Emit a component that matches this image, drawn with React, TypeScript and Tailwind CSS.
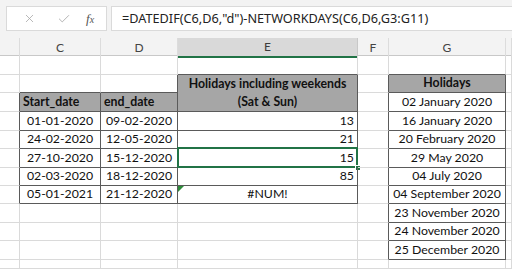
import { X, Check } from 'lucide-react'

type Cell = {
  text?: string
  align?: 'left' | 'center' | 'right'
  bold?: boolean
  fill?: boolean
  boxed?: boolean
  span?: boolean
  selected?: boolean
  errorMark?: boolean
  lines?: string[]
}

const rowHeights = [19, 18, 19, 19, 18, 19, 18, 18, 19, 18, 19, 9]
const colCount = 7 // B C D E F G H

const holidays = [
  '02 January 2020',
  '16 January 2020',
  '20 February 2020',
  '29 May 2020',
  '04 July 2020',
  '04 September 2020',
  '23 November 2020',
  '24 November 2020',
  '25 December 2020',
]

const dates = [
  ['01-01-2020', '09-02-2020', '13'],
  ['24-02-2020', '12-05-2020', '21'],
  ['27-10-2020', '15-12-2020', '15'],
  ['02-03-2020', '18-12-2020', '85'],
  ['05-01-2021', '21-12-2020', '#NUM!'],
]

function buildSheet(): (Cell | null)[][] {
  const rows: (Cell | null)[][] = rowHeights.map(() => Array.from({ length: colCount }, () => ({} as Cell)))

  // E2:E3 merged header
  rows[1][3] = {
    lines: ['Holidays including weekends', '(Sat & Sun)'],
    bold: true,
    fill: true,
    boxed: true,
    span: true,
    align: 'center',
  }
  rows[2][3] = null

  // G header
  rows[1][5] = { text: 'Holidays', bold: true, fill: true, boxed: true, align: 'center' }
  holidays.forEach((h, i) => {
    rows[2 + i][5] = { text: h, boxed: true, align: 'center' }
  })

  // C/D headers
  rows[2][1] = { text: 'Start_date', bold: true, fill: true, boxed: true, align: 'left' }
  rows[2][2] = { text: 'end_date', bold: true, fill: true, boxed: true, align: 'left' }

  dates.forEach(([start, end, result], i) => {
    const r = 3 + i
    rows[r][1] = { text: start, boxed: true, align: 'center' }
    rows[r][2] = { text: end, boxed: true, align: 'center' }
    rows[r][3] = {
      text: result,
      boxed: true,
      align: result === '#NUM!' ? 'center' : 'right',
      selected: i === 2,
      errorMark: i === 4,
    }
  })

  return rows
}

function isBoxed(rows: (Cell | null)[][], r: number, c: number) {
  if (r < 0 || r >= rows.length || c < 0 || c >= colCount) return false
  const cell = rows[r][c]
  if (cell === null) return true // covered by merge
  return !!cell.boxed
}

function ColumnHeaders() {
  const cols = ['', 'C', 'D', 'E', 'F', 'G', '']
  return (
    <div className="grid h-[18px] grid-cols-[20px_81px_77px_180px_31px_117px_6px] border-b border-[#c8c8c8] bg-[#f3f3f3]">
      {cols.map((c, i) => (
        <div
          key={i}
          className={
            'flex items-center justify-center text-[12px] ' +
            (i === 3
              ? 'border-b-2 border-b-[#217346] bg-[#d9d9d9] text-[#3c3c3c] border-r border-r-[#c8c8c8]'
              : 'border-r border-r-[#dcdcdc] text-[#444]')
          }
        >
          {c}
        </div>
      ))}
    </div>
  )
}

function FormulaBar() {
  return (
    <div className="flex h-[38px] gap-[4px] bg-[#f3f3f3] pl-[6px] pt-[6px]">
      <div className="flex h-[25px] w-[101px] items-center border border-[#dadada] bg-white text-[#a9a9a9]">
        <X className="ml-[16px] h-[13px] w-[13px]" strokeWidth={1.5} />
        <Check className="ml-[21px] h-[14px] w-[14px]" strokeWidth={1.5} />
        <span className="ml-[15px] font-['Liberation_Serif',serif] text-[13px] italic text-[#555]">
          f<span className="text-[10px]">x</span>
        </span>
      </div>
      <div className="flex h-[25px] flex-1 items-center border border-r-0 border-[#dadada] bg-white pl-[10px] font-['Noto_Sans',sans-serif] text-[12.7px] text-[#222]">
        =DATEDIF(C6,D6,"d")-NETWORKDAYS(C6,D6,G3:G11)
      </div>
    </div>
  )
}

export default function App() {
  const rows = buildSheet()

  return (
    <div className="h-[269px] w-[512px] overflow-hidden bg-white font-['Lato',sans-serif]">
      <FormulaBar />
      <ColumnHeaders />
      <div className="grid grid-cols-[20px_81px_77px_180px_31px_117px_6px] grid-rows-[19px_18px_19px_19px_18px_19px_18px_18px_19px_18px_19px_9px]">
        {rows.map((row, r) =>
          row.map((cell, c) => {
            if (cell === null) return null
            const here = isBoxed(rows, r, c)
            const rightDark = here || isBoxed(rows, r, c + 1)
            const belowR = cell.span ? r + 2 : r + 1
            const bottomDark = here || isBoxed(rows, belowR, c)
            const align =
              cell.align === 'right'
                ? 'justify-end pr-[3px]'
                : cell.align === 'left'
                  ? 'justify-start pl-[3px]'
                  : 'justify-center'
            return (
              <div
                key={`${r}-${c}`}
                className={
                  'relative flex items-center whitespace-nowrap border-r border-b text-[12.3px] leading-none text-[#111] ' +
                  align +
                  (rightDark ? ' border-r-[#5a5a5a]' : ' border-r-[#dadada]') +
                  (bottomDark ? ' border-b-[#5a5a5a]' : ' border-b-[#dadada]') +
                  (cell.fill ? ' bg-[#a6a6a6]' : '') +
                  (cell.bold ? ' font-bold' : '') +
                  (cell.span ? ' row-span-2 flex-col justify-center gap-[6px]' : '')
                }
              >
                {cell.lines ? cell.lines.map((l) => <span key={l}>{l}</span>) : cell.text}
                {cell.selected && (
                  <>
                    <div className="pointer-events-none absolute -left-[1px] -top-[2px] -right-[1px] -bottom-[1px] border-2 border-[#217346]" />
                    <div className="absolute -bottom-[4px] -right-[4px] h-[6px] w-[6px] border border-white bg-[#217346]" />
                  </>
                )}
                {cell.errorMark && (
                  <div className="absolute left-0 top-0 h-0 w-0 border-t-[6px] border-r-[6px] border-t-[#2e8b3a] border-r-transparent" />
                )}
              </div>
            )
          }),
        )}
      </div>
    </div>
  )
}
